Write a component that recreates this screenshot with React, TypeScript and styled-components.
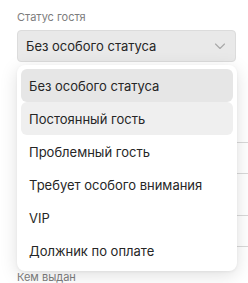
import { useState } from "react";
import styled, { createGlobalStyle } from "styled-components";

const GlobalStyle = createGlobalStyle`
  html, body {
    margin: 0;
    padding: 0;
    background: #ffffff;
    overflow: hidden;
  }
  body {
    font-family: Inter, "Noto Sans", "Liberation Sans", sans-serif;
    -webkit-font-smoothing: antialiased;
  }
`;

const Page = styled.div`
  width: 248px;
  height: 283px;
  overflow: hidden;
  padding: 9px 0 0 17px;
  box-sizing: border-box;
  display: flex;
  flex-direction: column;
`;

const Field = styled.div<{ $gap: number }>`
  position: relative;
  display: flex;
  flex-direction: column;
  gap: 5px;
  margin-bottom: ${(props) => props.$gap}px;
`;

const Label = styled.span`
  min-height: 16px;
  font-size: 11px;
  line-height: 16px;
  color: #7d7d7d;
`;

const SelectBox = styled.div`
  width: 219px;
  height: 32px;
  box-sizing: border-box;
  display: flex;
  align-items: center;
  justify-content: space-between;
  padding: 0 8px 0 8px;
  background: #e9e9e9;
  border: 1px solid #dcdcdc;
  border-radius: 4px;
  font-size: 13px;
  color: #262626;
`;

const Chevron = styled.svg`
  width: 12px;
  height: 12px;
  margin-right: 1px;
  color: #a8a8a8;
`;

const Menu = styled.ul`
  position: absolute;
  top: 56px;
  left: 0;
  z-index: 10;
  width: 220px;
  margin: 0;
  padding: 4px;
  box-sizing: border-box;
  list-style: none;
  background: #ffffff;
  border-radius: 8px;
  box-shadow: 0 4px 18px rgba(0, 0, 0, 0.13), 0 1px 3px rgba(0, 0, 0, 0.05);
`;

const Option = styled.li<{ $state: "selected" | "hover" | "idle" }>`
  height: 33px;
  display: flex;
  align-items: center;
  padding: 0 8px;
  border-radius: 6px;
  font-size: 13px;
  color: #262626;
  background: ${(props) =>
    props.$state === "selected"
      ? "#e6e6e6"
      : props.$state === "hover"
      ? "#efefef"
      : "transparent"};
`;

const Input = styled.div`
  width: 260px;
  height: 32px;
  box-sizing: border-box;
  border: 1px solid #d9d9d9;
  border-radius: 4px;
`;

const options = [
  "Без особого статуса",
  "Постоянный гость",
  "Проблемный гость",
  "Требует особого внимания",
  "VIP",
  "Должник по оплате",
];

export default function App() {
  const [value] = useState(options[0]);
  const hovered = options[1];
  return (
    <>
      <GlobalStyle />
      <Page>
        <Field $gap={59}>
          <Label>Статус гостя</Label>
          <SelectBox>
            <span>{value}</span>
            <Chevron viewBox="0 0 12 12" fill="none">
              <path
                d="M1.5 4l4.5 4.5L10.5 4"
                stroke="currentColor"
                strokeWidth="1.1"
                strokeLinecap="round"
                strokeLinejoin="round"
              />
            </Chevron>
          </SelectBox>
          <Menu>
            {options.map((o) => (
              <Option
                key={o}
                $state={o === value ? "selected" : o === hovered ? "hover" : "idle"}
              >
                {o}
              </Option>
            ))}
          </Menu>
        </Field>
        {/* fields hidden under the open menu */}
        <Field $gap={20}>
          <Label />
          <Input />
        </Field>
        <Field $gap={22}>
          <Label />
          <Input />
        </Field>
        <Field $gap={0}>
          <Label>Кем выдан</Label>
          <Input />
        </Field>
      </Page>
    </>
  );
}
